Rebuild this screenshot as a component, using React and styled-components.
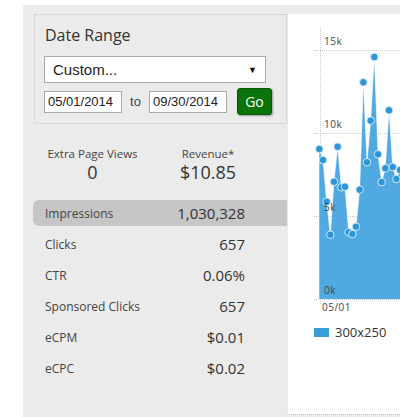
import React from "react";
import styled, { createGlobalStyle } from "styled-components";

const GlobalStyle = createGlobalStyle`
  html, body {
    margin: 0;
    padding: 0;
    background: #ffffff;
  }
  body {
    font-family: "Open Sans", "Liberation Sans", sans-serif;
    color: #333;
  }
`;

const rows = [
  { label: "Impressions", value: "1,030,328", active: true },
  { label: "Clicks", value: "657" },
  { label: "CTR", value: "0.06%" },
  { label: "Sponsored Clicks", value: "657" },
  { label: "eCPM", value: "$0.01" },
  { label: "eCPC", value: "$0.02" },
];

// page coordinates of the chart points (read off the screenshot)
const series = [
  149, 160, 201.7, 234.7, 181.7, 146.7, 187.3, 186.7, 232.3, 234, 226.7, 189.7,
  82.3, 162.3, 120.7, 57, 154.3, 182, 168.3, 110.3, 167, 179, 170, 150, 175,
];

const OX = 288;
const OY = 14;
const BASE = 299;

const grid = [
  { y: 50, label: "15k" },
  { y: 133, label: "10k" },
  { y: 216, label: "5k" },
  { y: 299, label: "0k" },
];

const App = () => {
  return (
    <Root>
      <GlobalStyle />
      <Wrapper>
        <LeftCol>
          <DateBox>
            <BoxTitle>Date Range</BoxTitle>
            <FakeSelect>
              <span>Custom...</span>
              <Caret>▼</Caret>
            </FakeSelect>
            <DateRow>
              <DateInput defaultValue="05/01/2014" />
              <To>to</To>
              <DateInput defaultValue="09/30/2014" />
              <GoButton>Go</GoButton>
            </DateRow>
          </DateBox>

          <Stats>
            <StatBox width={95}>
              <StatLabel>Extra Page Views</StatLabel>
              <StatValue>0</StatValue>
            </StatBox>
            <StatBox width={96}>
              <StatLabel>Revenue*</StatLabel>
              <StatValue>$10.85</StatValue>
            </StatBox>
          </Stats>

          <Table>
            {rows.map((r) => (
              <Row key={r.label} active={r.active}>
                <RowLabel>{r.label}</RowLabel>
                <RowValue>{r.value}</RowValue>
              </Row>
            ))}
          </Table>
        </LeftCol>

        <ChartPanel>
          <Chart />
          <Legend>
            <Swatch />
            <LegendText>300x250</LegendText>
          </Legend>
        </ChartPanel>
      </Wrapper>
    </Root>
  );
};

const Chart = () => {
  const pts = series.map((y, i) => [319.3 + 3.67 * i - OX, y - OY]);
  const base = BASE - OY;
  const line = pts.map((p, i) => `${i ? "L" : "M"}${p[0]},${p[1]}`).join(" ");
  const area = `M${pts[0][0]},${base} ${line.replace("M", "L")} L${
    pts[pts.length - 1][0]
  },${base} Z`;

  return (
    <svg width="112" height="300" style={{ display: "block" }}>
      {grid.map((g) => (
        <line
          key={g.label}
          x1={314 - OX}
          x2="112"
          y1={g.y - OY + 0.5}
          y2={g.y - OY + 0.5}
          stroke="#c8c8c8"
          strokeDasharray="1 1"
        />
      ))}
      <line
        x1={320 - OX + 0.5}
        x2={320 - OX + 0.5}
        y1={27 - OY}
        y2={305 - OY}
        stroke="#c8c8c8"
        strokeDasharray="1 1"
      />
      <path d={area} fill="#50a9e1" />
      <path d={line} fill="none" stroke="rgba(255,255,255,0.55)" strokeWidth="1" />
      {pts.map((p, i) => (
        <circle
          key={i}
          cx={p[0]}
          cy={p[1]}
          r="3.8"
          fill="#2d96d9"
          stroke="#cfe8f8"
          strokeWidth="1"
        />
      ))}
      {grid.map((g) => (
        <AxisText key={g.label} x={324 - OX} y={g.y - OY - 5}>
          {g.label}
        </AxisText>
      ))}
      <AxisText x={322 - OX} y={311 - OY}>
        05/01
      </AxisText>
    </svg>
  );
};

export default App;

const Root = styled.div`
  width: 400px;
  height: 417px;
  overflow: hidden;
  padding: 5px 0 0 23px;
  box-sizing: border-box;
  background: #ffffff;
`;

const Wrapper = styled.div`
  display: flex;
  height: 412px;
  background: #ebebeb;
`;

const LeftCol = styled.div`
  width: 264px;
  flex: none;
  display: flex;
  flex-direction: column;
`;

const DateBox = styled.div`
  margin: 9px 0 0 11px;
  padding: 9px 0 8px 9px;
  border: 1px dotted #c4c4c4;
  display: flex;
  flex-direction: column;
`;

const BoxTitle = styled.div`
  font-size: 16px;
  line-height: 22px;
  color: #333;
  padding-left: 1px;
`;

const FakeSelect = styled.div`
  margin-top: 10px;
  width: 222px;
  height: 27px;
  box-sizing: border-box;
  border: 1px solid #a9a9a9;
  background: #fff;
  display: flex;
  align-items: center;
  justify-content: space-between;
  padding: 0 8px 0 8px;
  font-family: "Liberation Sans", Arial, sans-serif;
  font-size: 15px;
  color: #222;
`;

const Caret = styled.span`
  font-size: 9px;
  color: #111;
`;

const DateRow = styled.div`
  margin-top: 5px;
  height: 27px;
  display: flex;
  align-items: center;
`;

const DateInput = styled.input`
  width: 78px;
  height: 22px;
  box-sizing: border-box;
  border: 1px solid #a9a9a9;
  background: #fff;
  padding: 0 0 0 3px;
  margin: 0;
  font-family: "Liberation Sans", Arial, sans-serif;
  font-size: 13px;
  color: #222;
  outline: none;
`;

const To = styled.span`
  width: 27px;
  text-align: center;
  font-family: "Liberation Sans", Arial, sans-serif;
  font-size: 13px;
  color: #444;
`;

const GoButton = styled.button`
  margin-left: 10px;
  width: 35px;
  height: 27px;
  border: 1px solid #065a06;
  border-radius: 3px;
  background: #0a730a;
  box-shadow: 1px 1px 2px rgba(0, 0, 0, 0.35);
  color: #fff;
  font-family: "Open Sans", sans-serif;
  font-size: 14px;
  padding: 0;
`;

const Stats = styled.div`
  margin: 22px 0 0 22px;
  display: flex;
  gap: 20px;
`;

const StatBox = styled.div`
  width: ${(p) => p.width}px;
  text-align: center;
  display: flex;
  flex-direction: column;
  gap: 1px;
`;

const StatLabel = styled.div`
  font-size: 11.5px;
  line-height: 15px;
  color: #444;
`;

const StatValue = styled.div`
  font-size: 18px;
  line-height: 20px;
  color: #333;
`;

const Table = styled.div`
  margin: 18px 0 0 10px;
  display: flex;
  flex-direction: column;
  gap: 5px;
`;

const Row = styled.div`
  height: 26px;
  display: flex;
  align-items: center;
  justify-content: space-between;
  padding: 0 42px 0 12px;
  border-radius: 6px 0 0 6px;
  background: ${(p) => (p.active ? "#c6c6c6" : "transparent")};
`;

const RowLabel = styled.span`
  font-size: 12px;
  color: #444;
`;

const RowValue = styled.span`
  font-size: 15px;
  color: #333;
`;

const ChartPanel = styled.div`
  flex: 1;
  margin-top: 9px;
  height: 400px;
  background: #fff;
  border-left: 1px dotted #d4d4d4;
  border-bottom: 1px dotted #b8b8b8;
  overflow: hidden;
`;

const AxisText = styled.text`
  font-family: "Open Sans", sans-serif;
  font-size: 10px;
  letter-spacing: 0.5px;
  fill: #444;
`;

const Legend = styled.div`
  margin: 14px 0 0 26px;
  height: 9px;
  display: flex;
  align-items: center;
  gap: 6px;
`;

const Swatch = styled.span`
  width: 15px;
  height: 9px;
  background: #3a9edb;
`;

const LegendText = styled.span`
  font-size: 13px;
  line-height: 13px;
  color: #333;
`;
